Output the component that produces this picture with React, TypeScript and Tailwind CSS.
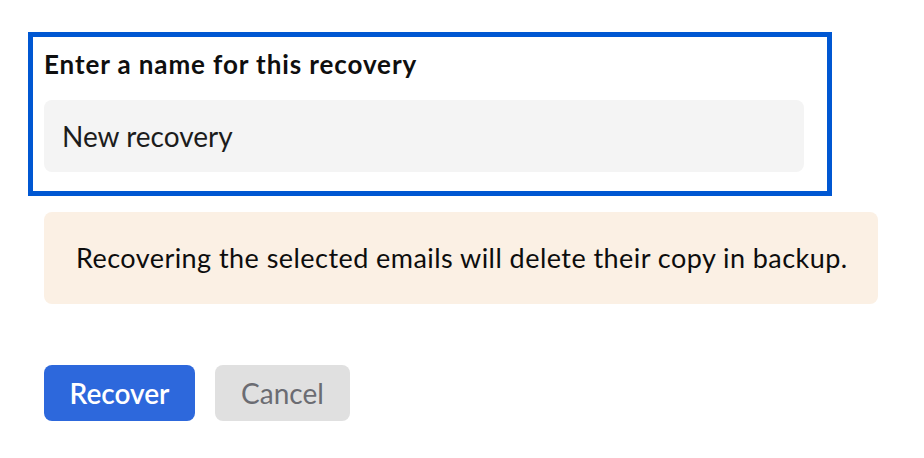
export default function App() {
  return (
    <div
      className="min-h-screen w-full bg-white pl-[44px] pt-[32px]"
      style={{ fontFamily: "Lato, 'Noto Sans', sans-serif" }}
    >
      {/* focused field group */}
      <div className="-ml-[16px] w-[804px] border-[5px] border-[#0057d2] pl-[11px] pt-[13px] pb-[19px]">
        <label className="block text-[26px] leading-[29px] font-bold tracking-[0.9px] text-[#0f0f0f]">
          Enter a name for this recovery
        </label>
        <div className="mt-[21px] flex h-[72px] w-[760px] items-center rounded-[8px] bg-[#f4f4f4] pl-[18px] text-[28px] text-[#1c1c1c]">
          New recovery
        </div>
      </div>

      <div className="mt-[16px] flex h-[92px] w-[834px] items-center rounded-[8px] bg-[#fbf0e4] pl-[32px] text-[27px] tracking-[0.45px] text-[#0d0d0d]">
        Recovering the selected emails will delete their copy in backup.
      </div>

      <div className="mt-[61px] flex gap-[20px]">
        <button className="h-[56px] w-[151px] rounded-[8px] bg-[#2d68dc] text-[28px] font-semibold text-white">
          Recover
        </button>
        <button className="h-[56px] w-[135px] rounded-[8px] bg-[#e0e0e0] text-[28px] text-[#6b6c72]">
          Cancel
        </button>
      </div>
    </div>
  );
}
